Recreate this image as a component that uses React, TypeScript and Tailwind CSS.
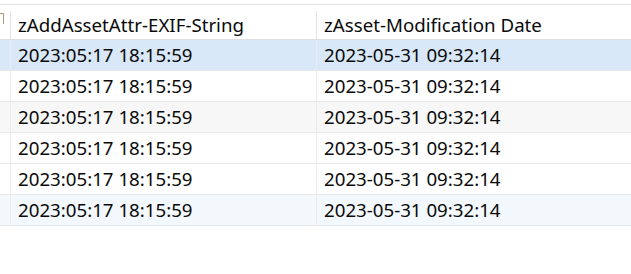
import React from "react";

const rows = [
  { exif: "2023:05:17 18:15:59", mod: "2023-05-31 09:32:14", bg: "bg-[#d9e8f8]" },
  { exif: "2023:05:17 18:15:59", mod: "2023-05-31 09:32:14", bg: "bg-white" },
  { exif: "2023:05:17 18:15:59", mod: "2023-05-31 09:32:14", bg: "bg-[#f7f7f7]" },
  { exif: "2023:05:17 18:15:59", mod: "2023-05-31 09:32:14", bg: "bg-white" },
  { exif: "2023:05:17 18:15:59", mod: "2023-05-31 09:32:14", bg: "bg-white" },
  { exif: "2023:05:17 18:15:59", mod: "2023-05-31 09:32:14", bg: "bg-[#f3f8fd]" },
];

export default function App() {
  return (
    <div
      className="w-[631px] h-[274px] overflow-hidden bg-white text-[#0a0a0a] text-[18.7px]"
      style={{ fontFamily: '"Noto Sans", "Open Sans", sans-serif' }}
    >
      <div className="h-[4px]" />
      {/* header */}
      <div className="grid grid-cols-[11px_306px_1fr] h-[36px] border-t border-b border-t-[#e6e6e6] border-b-[#dedede] pt-[6px]">
        <div className="relative h-[28px] border-r border-[#e3e3e3]">
          <svg width="6" height="14" className="absolute left-0 top-[1px]">
            <path d="M0 1.5H3.5M3.5 1.5V12" stroke="#a89c6a" strokeWidth="1" fill="none" />
          </svg>
        </div>
        <div className="h-[28px] flex items-center pl-[7px] border-r border-[#e3e3e3] whitespace-nowrap">
          zAddAssetAttr-EXIF-String
        </div>
        <div className="h-[28px] flex items-center pl-[7px] whitespace-nowrap">
          zAsset-Modification Date
        </div>
      </div>
      {/* body */}
      {rows.map((r, i) => (
        <div
          key={i}
          className={`grid grid-cols-[11px_306px_1fr] h-[31px] border-b border-[#e8e8e8] ${r.bg}`}
        >
          <div className="border-r border-[#ececec]" />
          <div className="flex items-center pl-[7px] border-r border-[#ececec] whitespace-nowrap">
            {r.exif}
          </div>
          <div className="flex items-center pl-[7px] whitespace-nowrap">{r.mod}</div>
        </div>
      ))}
    </div>
  );
}
